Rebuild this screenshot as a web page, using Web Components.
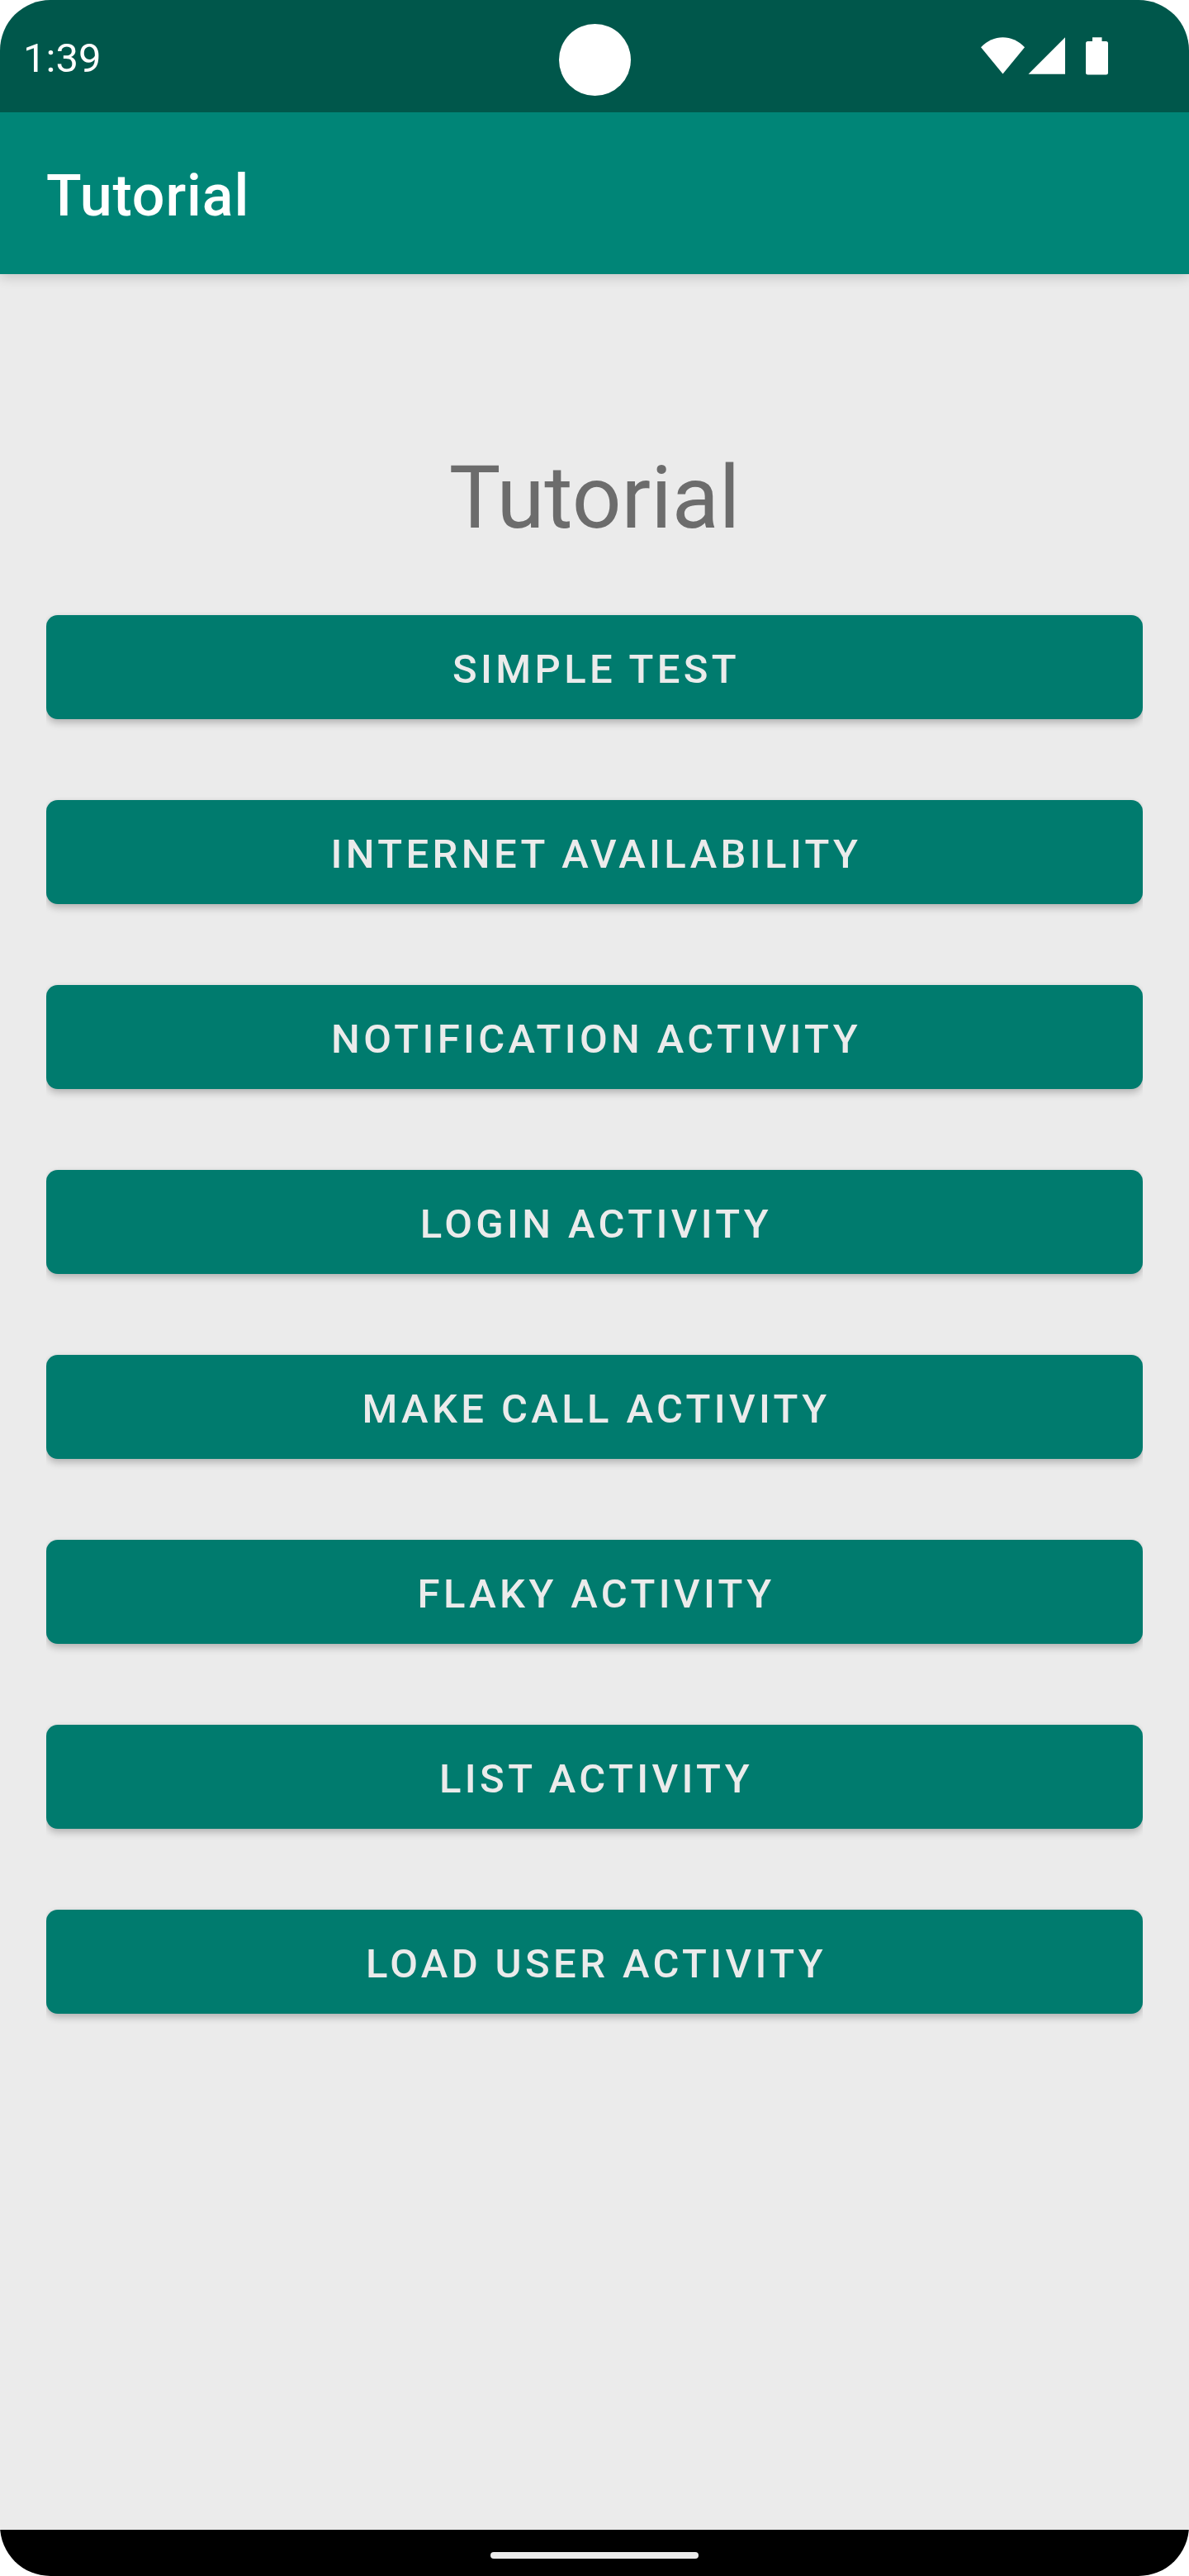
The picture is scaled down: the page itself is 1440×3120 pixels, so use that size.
<!DOCTYPE html>
<html lang="en">
<head>
<meta charset="utf-8">
<title>Tutorial</title>
<style>
html, body { margin: 0; background: #fff; }
body { font-family: Roboto, "Liberation Sans", sans-serif; }
</style>
</head>
<body>
<phone-screen>
  <status-bar slot="status">1:39</status-bar>
  <app-bar slot="bar">Tutorial</app-bar>
  <page-title>Tutorial</page-title>
  <button-list>
    <material-button>SIMPLE TEST</material-button>
    <material-button>INTERNET AVAILABILITY</material-button>
    <material-button>NOTIFICATION ACTIVITY</material-button>
    <material-button>LOGIN ACTIVITY</material-button>
    <material-button>MAKE CALL ACTIVITY</material-button>
    <material-button>FLAKY ACTIVITY</material-button>
    <material-button>LIST ACTIVITY</material-button>
    <material-button>LOAD USER ACTIVITY</material-button>
  </button-list>
  <nav-bar slot="nav"></nav-bar>
</phone-screen>
<script>
const define = (name, html) => customElements.define(name, class extends HTMLElement {
  constructor() {
    super();
    const t = document.createElement('template');
    t.innerHTML = html;
    this.attachShadow({ mode: 'open' }).append(t.content.cloneNode(true));
  }
});

define('phone-screen', `
<style>
:host { display: flex; flex-direction: column; width: 1440px; height: 3120px; border-radius: 61px; overflow: hidden; background: #ebebeb; }
main { flex: 1; display: flex; flex-direction: column; box-sizing: border-box; padding: 210px 56px 0; }
</style>
<slot name="status"></slot>
<slot name="bar"></slot>
<main><slot></slot></main>
<slot name="nav"></slot>`);

define('status-bar', `
<style>
:host { display: grid; grid-template-columns: 677px 87px 1fr; height: 136px; background: #00574b; color: #fff; font-size: 49px; line-height: 57px; }
.time { padding: 42px 0 0 28px; }
.camera { width: 87px; height: 87px; margin-top: 29px; border-radius: 50%; background: #fff; }
.icons { justify-self: end; padding: 40px 92px 0 0; }
svg { display: block; }
</style>
<div class="time"><slot></slot></div>
<div class="camera"></div>
<div class="icons">
  <svg width="164" height="56" viewBox="1184 40 164 56" fill="#fff">
    <path d="M1188 57.2C1203 41.2 1226 41.2 1241 57.2L1214.5 89.5Z"/>
    <path d="M1245.5 89.8L1290 45.3V89.8Z"/>
    <path d="M1323 45.2H1334.5V50H1339.5Q1342 50 1342 52.5V88Q1342 90.5 1339.5 90.5H1317.5Q1315 90.5 1315 88V52.5Q1315 50 1317.5 50H1323Z"/>
  </svg>
</div>`);

define('app-bar', `
<style>
:host { display: flex; align-items: center; box-sizing: border-box; height: 196px; padding: 6px 56px 0; background: #008577; color: #fff; font-size: 70px; font-weight: 500; line-height: 82px; letter-spacing: .0125em; box-shadow: 0 4px 14px rgba(0,0,0,.16); clip-path: inset(0 0 -30px 0); }
</style><slot></slot>`);

define('page-title', `
<style>
:host { display: block; height: 123px; line-height: 123px; font-size: 105px; text-align: center; color: #6c6c6c; }
</style><slot></slot>`);

define('button-list', `
<style>
:host { display: flex; flex-direction: column; gap: 98px; margin-top: 80px; }
</style><slot></slot>`);

define('material-button', `
<style>
:host { display: block; clip-path: inset(-20px 0); }
button { display: flex; justify-content: center; align-items: center; box-sizing: border-box; width: 100%; height: 126px; margin: 0; padding: 5px 0 0 4px; border: 0; border-radius: 14px; background: #007b6e; color: #ebebeb; font: 500 49px/57px Roboto, "Liberation Sans", sans-serif; letter-spacing: 4.375px; box-shadow: 0 5px 9px rgba(0,0,0,.21), 0 0 5px rgba(0,0,0,.05); }
</style>
<button type="button"><slot></slot></button>`);

define('nav-bar', `
<style>
:host { display: flex; justify-content: center; box-sizing: border-box; height: 56px; padding-top: 27px; background: #000; }
div { width: 252px; height: 8px; border-radius: 4px; background: #ebebeb; }
</style><div></div>`);
</script>
</body>
</html>
